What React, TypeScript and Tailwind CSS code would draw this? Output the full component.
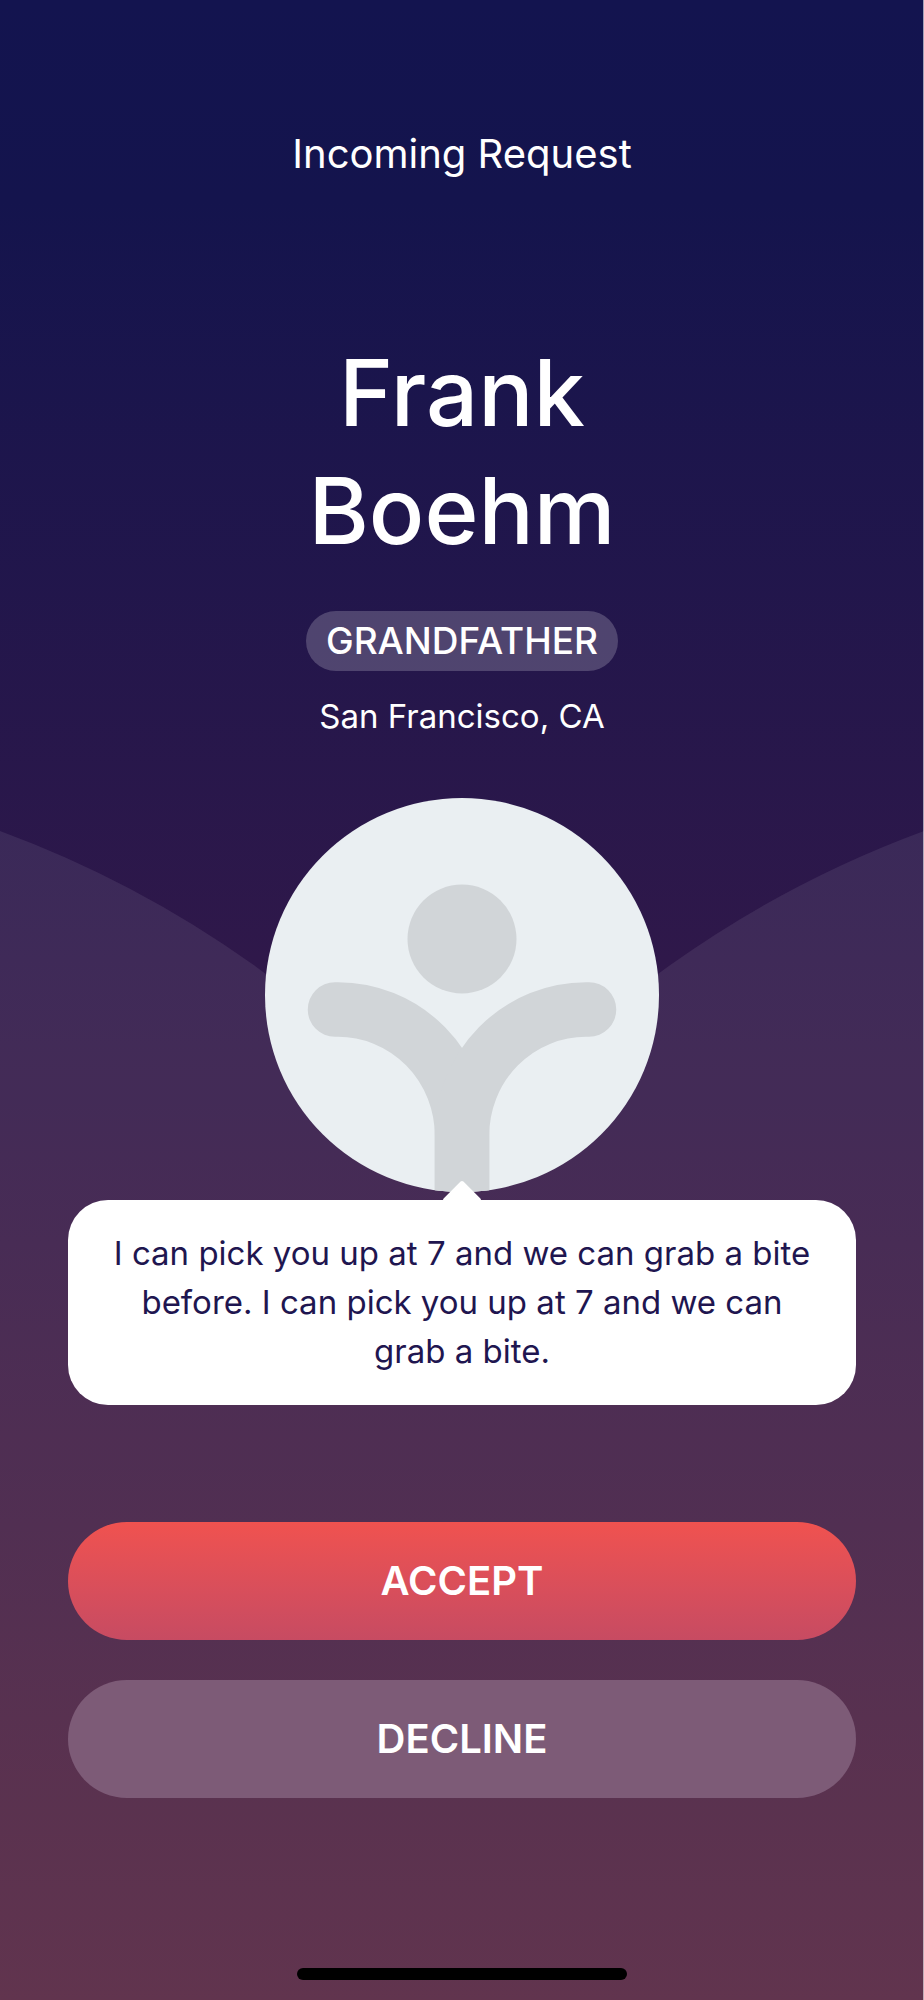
import { useState } from "react";

interface Request {
  firstName: string;
  lastName: string;
  relation: string;
  location: string;
  message: string;
}

const request: Request = {
  firstName: "Frank",
  lastName: "Boehm",
  relation: "GRANDFATHER",
  location: "San Francisco, CA",
  message:
    "I can pick you up at 7 and we can grab a bite before. I can pick you up at 7 and we can grab a bite.",
};

function Hills() {
  return (
    <svg
      className="absolute inset-0 h-full w-full"
      viewBox="0 0 924 2000"
      preserveAspectRatio="none"
      aria-hidden="true"
    >
      <path
        d="M0 831A1078 1078 0 0 1 462 1160A1078 1078 0 0 1 924 831V2000H0Z"
        fill="#fff"
        fillOpacity="0.08"
      />
    </svg>
  );
}

function Avatar() {
  return (
    <svg className="size-[394px] rounded-full bg-[#eaeff2]" viewBox="0 0 394 394" role="img" aria-label="Profile">
      <circle cx="197" cy="141" r="54.5" fill="#d1d5d8" />
      <g fill="none" stroke="#d1d5d8" strokeWidth="54.5" strokeLinecap="round">
        <path d="M70 211.500H73A124 126 0 0 1 197 337.500V420" />
        <path d="M324 211.500H321A124 126 0 0 0 197 337.500V420" />
      </g>
    </svg>
  );
}

export default function App() {
  const [, setAnswer] = useState<"accepted" | "declined" | null>(null);

  return (
    <main className="relative flex min-h-screen flex-col items-center bg-[linear-gradient(#13144f,#14144d_10%,#2f184a_48%,#54233f)] px-[68px] pb-5 text-center font-['Inter','Liberation_Sans',sans-serif] text-white">
      <Hills />
      <div className="absolute inset-y-0 right-0 w-px bg-white/60" />

      <div className="relative flex w-full grow flex-col items-center">
        <h2 className="mt-32 text-[40px] leading-[52px]">Incoming Request</h2>

        <h1 className="mt-[154px] text-[92px] leading-[118px] font-medium">
          {request.firstName}
          <br />
          {request.lastName}
        </h1>

        <span className="mt-[41px] rounded-full bg-white/20 px-5 text-[37px] leading-[60px] font-medium">
          {request.relation}
        </span>
        <p className="mt-5 text-[33px] leading-[50px]">{request.location}</p>

        <div className="mt-[57px]">
          <Avatar />
        </div>

        <div className="relative mt-2 w-full rounded-[40px] bg-white px-10 py-[29px] text-[33px] leading-[49px] text-[#1f1650]">
          <span className="absolute -top-[14px] left-1/2 size-7 -translate-x-1/2 rotate-45 rounded-xs bg-white" />
          <p className="relative">{request.message}</p>
        </div>

        <div className="mt-[117px] flex w-full flex-col gap-10">
          <button
            type="button"
            onClick={() => setAnswer("accepted")}
            className="h-[118px] w-full rounded-full bg-linear-to-b from-[#f0524f] to-[#c74b62] text-[40px] font-semibold"
          >
            ACCEPT
          </button>
          <button
            type="button"
            onClick={() => setAnswer("declined")}
            className="h-[118px] w-full rounded-full bg-[#7d5b77] text-[40px] font-semibold"
          >
            DECLINE
          </button>
        </div>
      </div>

      <div className="relative mt-10 h-3 w-[330px] rounded-full bg-black" />
    </main>
  );
}
